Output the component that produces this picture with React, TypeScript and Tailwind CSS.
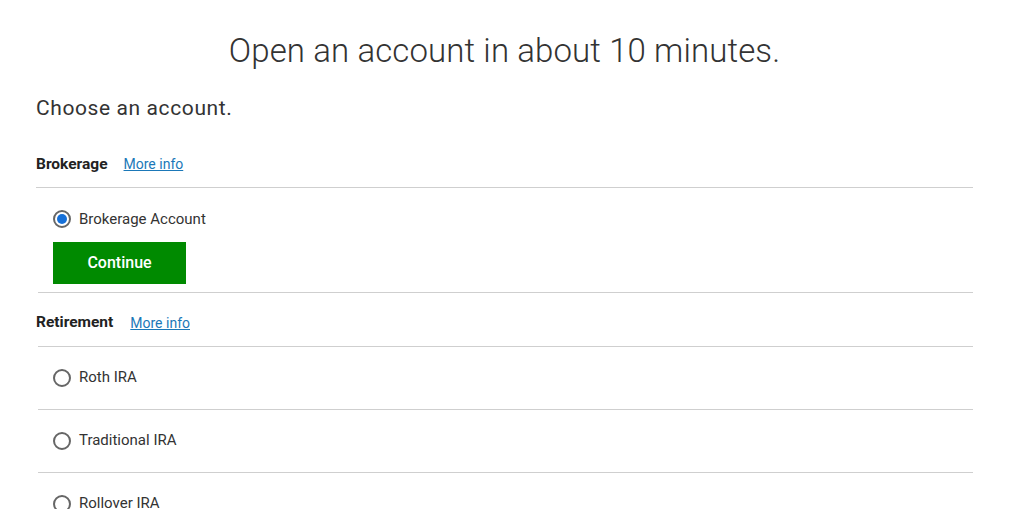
const font = { fontFamily: 'Roboto, "Liberation Sans", sans-serif' };

function Radio({ checked }: { checked?: boolean }) {
  return (
    <span className="flex h-[18px] w-[18px] shrink-0 items-center justify-center rounded-full border-2 border-[#666666] bg-white">
      {checked && <span className="h-[10px] w-[10px] rounded-full bg-[#1670d8]" />}
    </span>
  );
}

function Option({ label }: { label: string }) {
  return (
    <div className="ml-[2px] border-b border-[#cfcfcf] pl-[15px]">
      <label className="flex h-[62px] items-center gap-[8px] text-[15px] text-[#333333]">
        <Radio />
        <span>{label}</span>
      </label>
    </div>
  );
}

function MoreInfo() {
  return (
    <a href="#" className="text-[14px] text-[#1b78b8] underline">
      More info
    </a>
  );
}

export default function App() {
  return (
    <div className="min-h-[509px] w-full bg-white" style={font}>
      <div className="w-[973px] pl-[36px]">
        <h1 className="pt-[29px] text-center text-[33px] font-light leading-[44px] tracking-[0.1px] text-[#333333]">
          Open an account in about 10 minutes.
        </h1>
        <h2 className="mt-[20px] text-[21px] font-normal leading-[30px] tracking-[0.6px] text-[#333333]">
          Choose an account.
        </h2>

        <div className="mt-[19px] flex h-[46px] items-center gap-[16px] border-b border-[#cfcfcf]">
          <span className="text-[15.5px] font-bold text-[#222222]">Brokerage</span>
          <MoreInfo />
        </div>
        <div className="ml-[2px] border-b border-[#cfcfcf] pl-[15px] pt-[20px] pb-[8px]">
          <label className="flex items-center gap-[8px] text-[15px] text-[#333333]">
            <Radio checked />
            <span>Brokerage Account</span>
          </label>
          <button className="mt-[11px] h-[42px] w-[133px] bg-[#008a00] text-[16px] font-medium text-white">
            Continue
          </button>
        </div>

        <div className="flex h-[53px] items-center gap-[17px] pt-[8px]">
          <span className="text-[15.5px] font-bold text-[#222222]">Retirement</span>
          <MoreInfo />
        </div>
        <div className="ml-[2px] border-b border-[#cfcfcf]" />
        <Option label="Roth IRA" />
        <Option label="Traditional IRA" />
        <Option label="Rollover IRA" />
      </div>
    </div>
  );
}
